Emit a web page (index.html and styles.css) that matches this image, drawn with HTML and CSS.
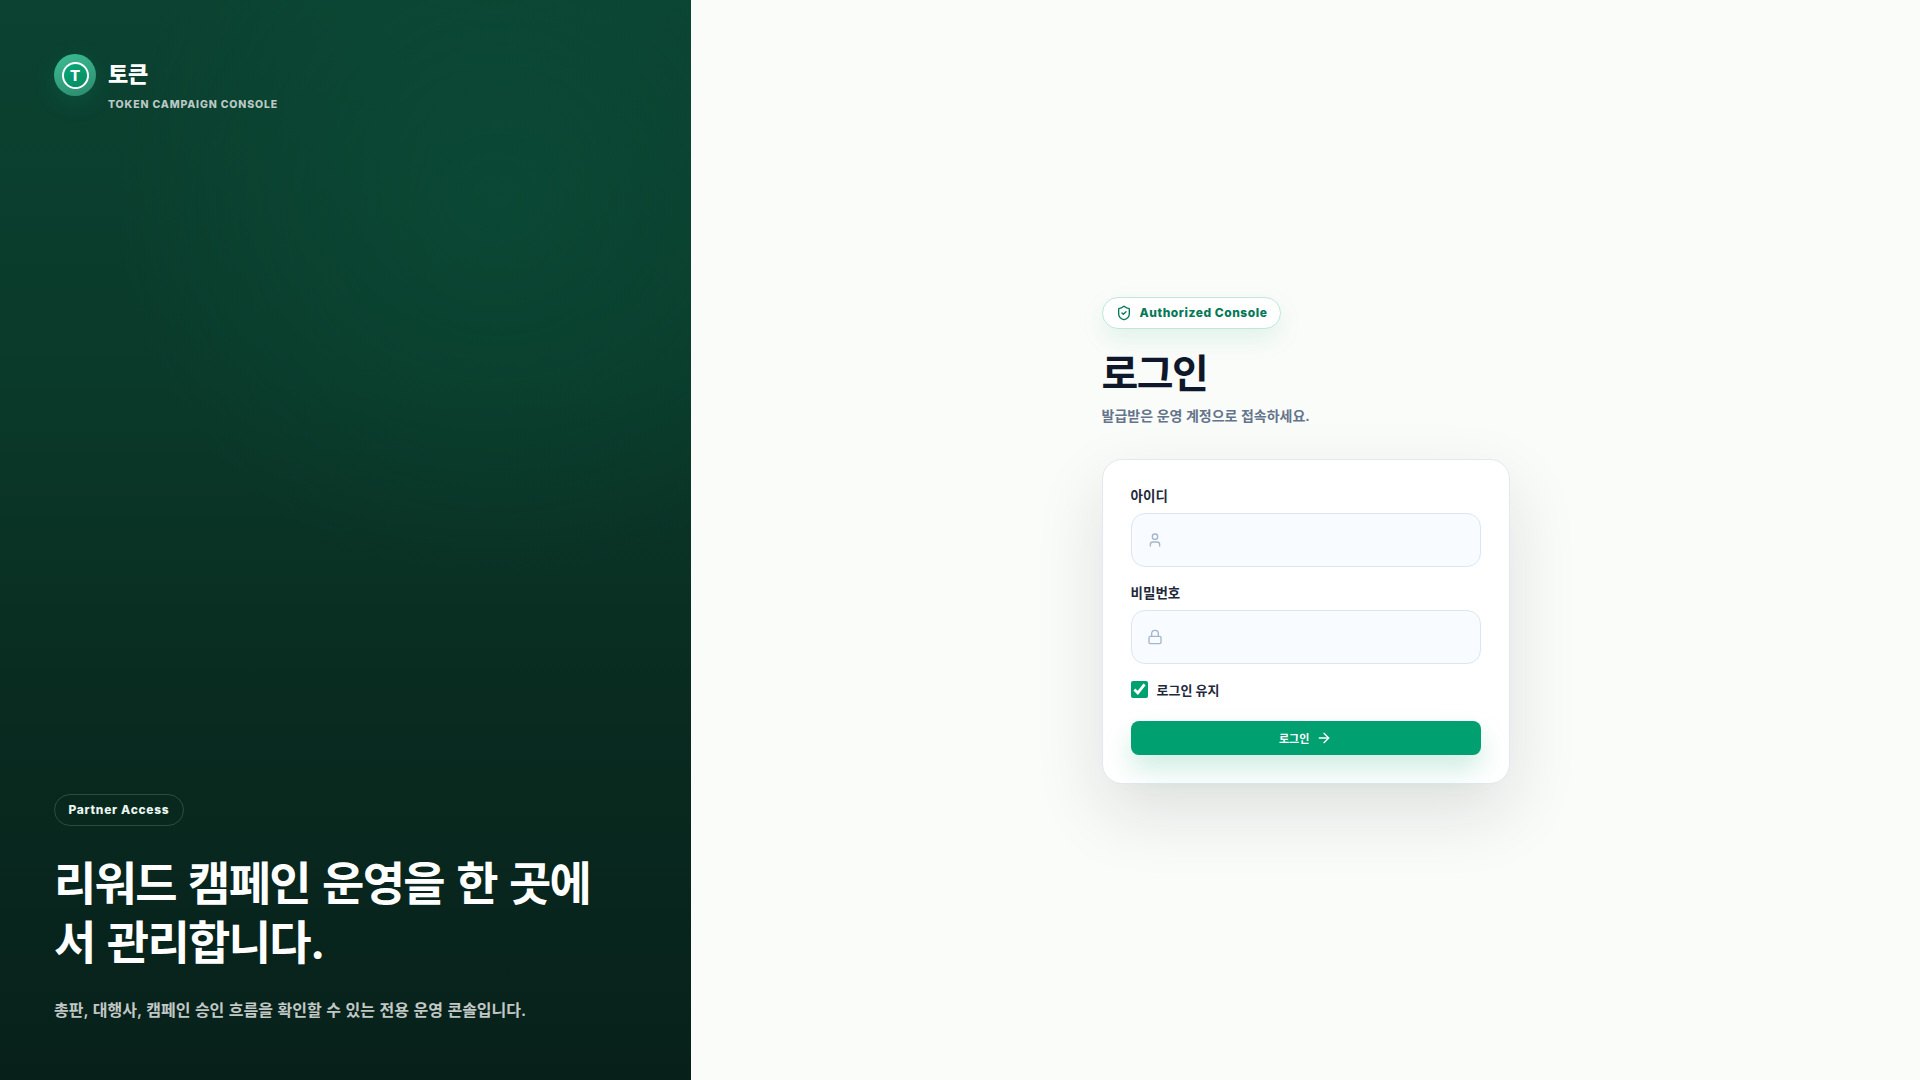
FILE: index.html
```html
<!DOCTYPE html>
<html lang="ko">

<head>
    <meta charset="UTF-8">
    <meta name="viewport" content="width=device-width, initial-scale=1.0">
    <title>토큰 로그인</title>
    <link rel="stylesheet" href="styles.css">
</head>

<body>
    <div class="login-page">
        <aside class="brand-panel">
            <div class="brand">
                <div class="brand-logo"><span class="brand-ring">T</span></div>
                <div class="brand-text">
                    <div class="brand-name">토큰</div>
                    <div class="brand-sub">TOKEN CAMPAIGN CONSOLE</div>
                </div>
            </div>

            <div class="hero">
                <span class="partner-pill">Partner Access</span>
                <h2>리워드 캠페인 운영을 한 곳에서 관리합니다.</h2>
                <p>총판, 대행사, 캠페인 승인 흐름을 확인할 수 있는 전용 운영 콘솔입니다.</p>
            </div>
        </aside>

        <main class="form-panel">
            <div class="form-wrap">
                <span class="console-pill">
                    <svg width="16" height="16" viewBox="0 0 24 24" fill="none" stroke="currentColor" stroke-width="2" stroke-linecap="round" stroke-linejoin="round">
                        <path d="M20 13c0 5-3.5 7.5-7.66 8.95a1 1 0 0 1-.67-.01C7.5 20.5 4 18 4 13V6a1 1 0 0 1 1-1c2 0 4.5-1.2 6.24-2.72a1.17 1.17 0 0 1 1.52 0C14.51 3.81 17 5 19 5a1 1 0 0 1 1 1z" />
                        <path d="m9 12 2 2 4-4" />
                    </svg>
                    Authorized Console
                </span>
                <h1>로그인</h1>
                <p class="form-desc">발급받은 운영 계정으로 접속하세요.</p>

                <form class="login-card">
                    <div class="form-group">
                        <label for="userId">아이디</label>
                        <div class="input-box">
                            <svg width="16" height="16" viewBox="0 0 24 24" fill="none" stroke="currentColor" stroke-width="2" stroke-linecap="round" stroke-linejoin="round">
                                <path d="M19 21v-2a4 4 0 0 0-4-4H9a4 4 0 0 0-4 4v2" />
                                <circle cx="12" cy="7" r="4" />
                            </svg>
                            <input type="text" id="userId">
                        </div>
                    </div>
                    <div class="form-group">
                        <label for="userPw">비밀번호</label>
                        <div class="input-box">
                            <svg width="16" height="16" viewBox="0 0 24 24" fill="none" stroke="currentColor" stroke-width="2" stroke-linecap="round" stroke-linejoin="round">
                                <rect x="3" y="11" width="18" height="11" rx="2" ry="2" />
                                <path d="M7 11V7a5 5 0 0 1 10 0v4" />
                            </svg>
                            <input type="password" id="userPw">
                        </div>
                    </div>
                    <label class="remember">
                        <input type="checkbox" checked>
                        로그인 유지
                    </label>
                    <button type="button" class="login-btn">
                        로그인
                        <svg width="16" height="16" viewBox="0 0 24 24" fill="none" stroke="currentColor" stroke-width="2" stroke-linecap="round" stroke-linejoin="round">
                            <path d="M5 12h14" />
                            <path d="m12 5 7 7-7 7" />
                        </svg>
                    </button>
                </form>
            </div>
        </main>
    </div>
</body>

</html>
```

FILE: styles.css
```css
* {
    box-sizing: border-box;
}

body {
    margin: 0;
    font-family: Inter, "Noto Sans CJK KR", sans-serif;
    color: #0f172a;
}

.login-page {
    display: flex;
    height: 100vh;
    overflow: hidden;
}

.brand-panel {
    width: 36%;
    padding: 54px 54px 57px;
    display: flex;
    flex-direction: column;
    justify-content: space-between;
    color: #fff;
    background:
        radial-gradient(circle 380px at 497px 200px, rgba(11, 100, 72, 0.28), rgba(11, 100, 72, 0)),
        linear-gradient(180deg, #0b4231 0%, #0a3a2a 35%, #092b20 65%, #07211a 100%);
}

.brand {
    display: flex;
    gap: 12px;
}

.brand-logo {
    width: 42px;
    height: 42px;
    border-radius: 50%;
    background: linear-gradient(160deg, #3cbd93, #2b8a6d);
    display: flex;
    align-items: center;
    justify-content: center;
    box-shadow: 0 6px 22px rgba(0, 160, 112, 0.2);
}

.brand-ring {
    width: 27px;
    height: 27px;
    border-radius: 50%;
    border: 2px solid #fff;
    background: linear-gradient(160deg, #0aa877, #078a62);
    display: flex;
    align-items: center;
    justify-content: center;
    font-size: 15px;
    font-weight: 800;
}

.brand-name {
    font-size: 22px;
    font-weight: 800;
    line-height: 26px;
    margin-top: 7px;
    letter-spacing: -0.01em;
}

.brand-sub {
    margin-top: 11px;
    font-size: 10.5px;
    font-weight: 800;
    letter-spacing: 0.08em;
    color: rgba(255, 255, 255, 0.72);
}

.partner-pill {
    display: inline-block;
    height: 32px;
    padding: 0 13.5px;
    line-height: 30px;
    border: 1px solid rgba(255, 255, 255, 0.16);
    border-radius: 16px;
    font-size: 12px;
    font-weight: 800;
    letter-spacing: 0.058em;
    color: #e8f5ef;
}

.hero h2 {
    max-width: 560px;
    margin: 28px 0 0;
    font-size: 46px;
    font-weight: 700;
    line-height: 59px;
    letter-spacing: -1.7px;
    word-spacing: 3px;
}

.hero p {
    margin: 25px 0 0;
    font-size: 16px;
    font-weight: 600;
    line-height: 26px;
    word-spacing: 0.5px;
    color: rgba(255, 255, 255, 0.76);
}

.form-panel {
    flex: 1;
    display: flex;
    align-items: center;
    justify-content: center;
    background: #fafcf9;
}

.form-wrap {
    width: 408px;
}

.console-pill {
    display: inline-flex;
    align-items: center;
    gap: 8px;
    height: 32px;
    padding: 0 13px;
    background: #fff;
    border: 1px solid #bfe8d8;
    border-radius: 16px;
    font-size: 12px;
    font-weight: 800;
    letter-spacing: 0.045em;
    color: #047857;
    box-shadow: 0 10px 24px rgba(0, 160, 112, 0.1);
}

h1 {
    margin: 22px 0 0;
    font-size: 40px;
    font-weight: 700;
    line-height: 46px;
    letter-spacing: -0.04em;
}

.form-desc {
    margin: 8px 0 0;
    font-size: 14px;
    font-weight: 600;
    line-height: 22px;
    color: #64748b;
}

.login-card {
    margin-top: 32px;
    padding: 28px;
    background: #fff;
    border: 1px solid #e2e8f0;
    border-radius: 20px;
    box-shadow: 0 28px 70px rgba(15, 23, 42, 0.12);
}

.form-group {
    margin-bottom: 18px;
}

.form-group + .form-group {
    margin-bottom: 16px;
}

.form-group label {
    display: block;
    margin-bottom: 8px;
    font-size: 13.5px;
    font-weight: 700;
    line-height: 17px;
    color: #1e293b;
}

.input-box {
    height: 54px;
    padding: 0 15px;
    display: flex;
    align-items: center;
    gap: 10px;
    background: #f8fbff;
    border: 1px solid #dbe6f2;
    border-radius: 14px;
    color: #a3b6cd;
}

.input-box input {
    flex: 1;
    min-width: 0;
    border: none;
    outline: none;
    background: transparent;
    font-size: 14px;
}

.remember {
    display: flex;
    align-items: center;
    gap: 9px;
    font-size: 13px;
    font-weight: 700;
    color: #1e293b;
}

.remember input {
    width: 17px;
    height: 17px;
    margin: 0;
    accent-color: #00a070;
}

.login-btn {
    width: 100%;
    height: 34px;
    margin-top: 22px;
    display: flex;
    align-items: center;
    justify-content: center;
    gap: 7px;
    background: #00a070;
    color: #fff;
    border: none;
    border-radius: 8px;
    font-family: inherit;
    font-size: 11px;
    font-weight: 700;
    box-shadow: 0 14px 28px rgba(0, 160, 112, 0.2);
}
```
